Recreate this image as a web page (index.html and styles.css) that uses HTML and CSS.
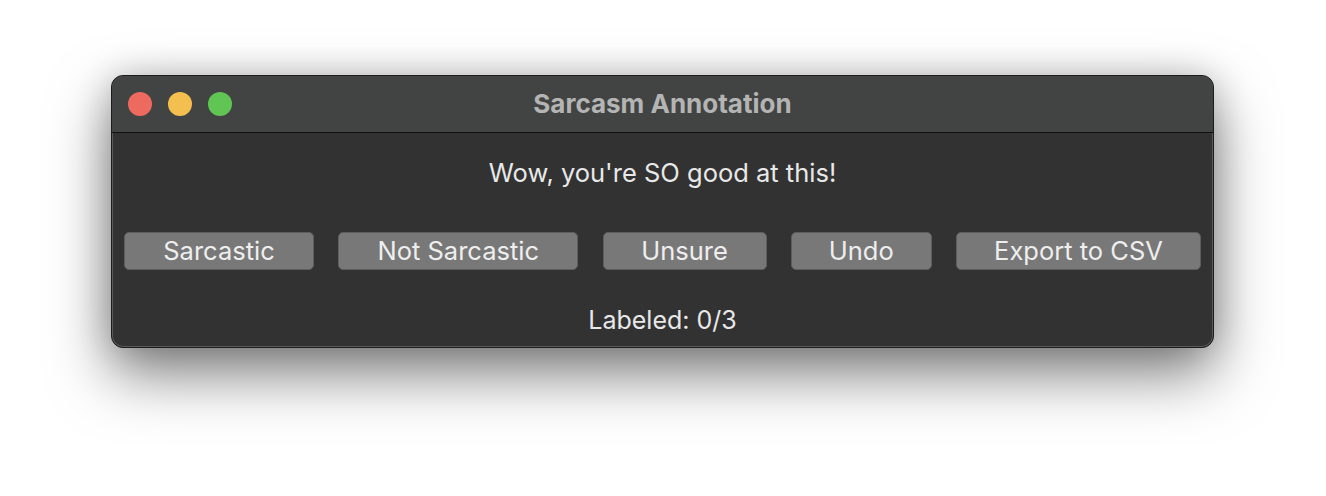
FILE: index.html
```html
<!DOCTYPE html>
<html>
<head>
<meta charset="utf-8">
<link rel="stylesheet" href="styles.css">
</head>
<body>
<div class="stage">
  <div class="window">
    <div class="titlebar">
      <div class="lights">
        <span class="light red"></span>
        <span class="light yellow"></span>
        <span class="light green"></span>
      </div>
      <div class="title">Sarcasm Annotation</div>
    </div>
    <div class="content">
      <div class="message">Wow, you're SO good at this!</div>
      <div class="buttons">
        <button class="btn b1">Sarcastic</button>
        <button class="btn b2">Not Sarcastic</button>
        <button class="btn b3">Unsure</button>
        <button class="btn b4">Undo</button>
        <button class="btn b5">Export to CSV</button>
      </div>
      <div class="status">Labeled: 0/3</div>
    </div>
  </div>
</div>
</body>
</html>
```
FILE: styles.css
```css
html, body {
  margin: 0;
  padding: 0;
  background: #ffffff;
  width: 1326px;
  height: 496px;
  overflow: hidden;
}
.stage {
  padding: 75px 0 0 111px;
}
.window {
  width: 1101px;
  height: 271px;
  border: 1px solid #1c1c1c;
  border-radius: 12px;
  background: #323232;
  overflow: hidden;
  box-shadow: inset 0 0 0 1px #5a5a5a, 0 26px 60px rgba(0,0,0,0.5), 0 0 34px rgba(0,0,0,0.18);
  font-family: Inter, "Liberation Sans", sans-serif;
  display: flex;
  flex-direction: column;
}
.titlebar {
  position: relative;
  height: 56px;
  background: #424443;
  border-bottom: 1px solid #111;
  display: flex;
  align-items: center;
  justify-content: center;
  flex-shrink: 0;
}
.lights {
  position: absolute;
  left: 16px;
  top: 16px;
  display: flex;
  gap: 16px;
}
.light {
  width: 24px;
  height: 24px;
  border-radius: 50%;
  display: block;
}
.red { background: #ed6a5e; }
.yellow { background: #f5bf4f; }
.green { background: #61c554; }
.title {
  color: #b4b4b4;
  font-weight: 700;
  font-size: 26px;
  margin-top: -2px;
}
.content {
  flex: 1;
  display: flex;
  flex-direction: column;
  align-items: center;
}
.message {
  color: #e8e8e8;
  font-size: 25.5px;
  margin-top: 26px;
  height: 28px;
  line-height: 28px;
}
.buttons {
  margin-top: 45px;
  width: 100%;
  box-sizing: border-box;
  padding: 0 12px;
  display: flex;
  justify-content: space-between;
}
.btn {
  height: 38px;
  box-sizing: border-box;
  border: 1px solid #5e5e5e;
  border-radius: 5px;
  background: #787878;
  color: #eeeeee;
  font-family: Inter, "Liberation Sans", sans-serif;
  font-size: 25.5px;
  padding: 0;
  line-height: 34px;
}
.b1 { width: 190px; }
.b2 { width: 240px; }
.b3 { width: 164px; }
.b4 { width: 141px; }
.b5 { width: 245px; }
.status {
  color: #e8e8e8;
  font-size: 25px;
  margin-top: 36px;
  height: 28px;
  line-height: 28px;
}
```
